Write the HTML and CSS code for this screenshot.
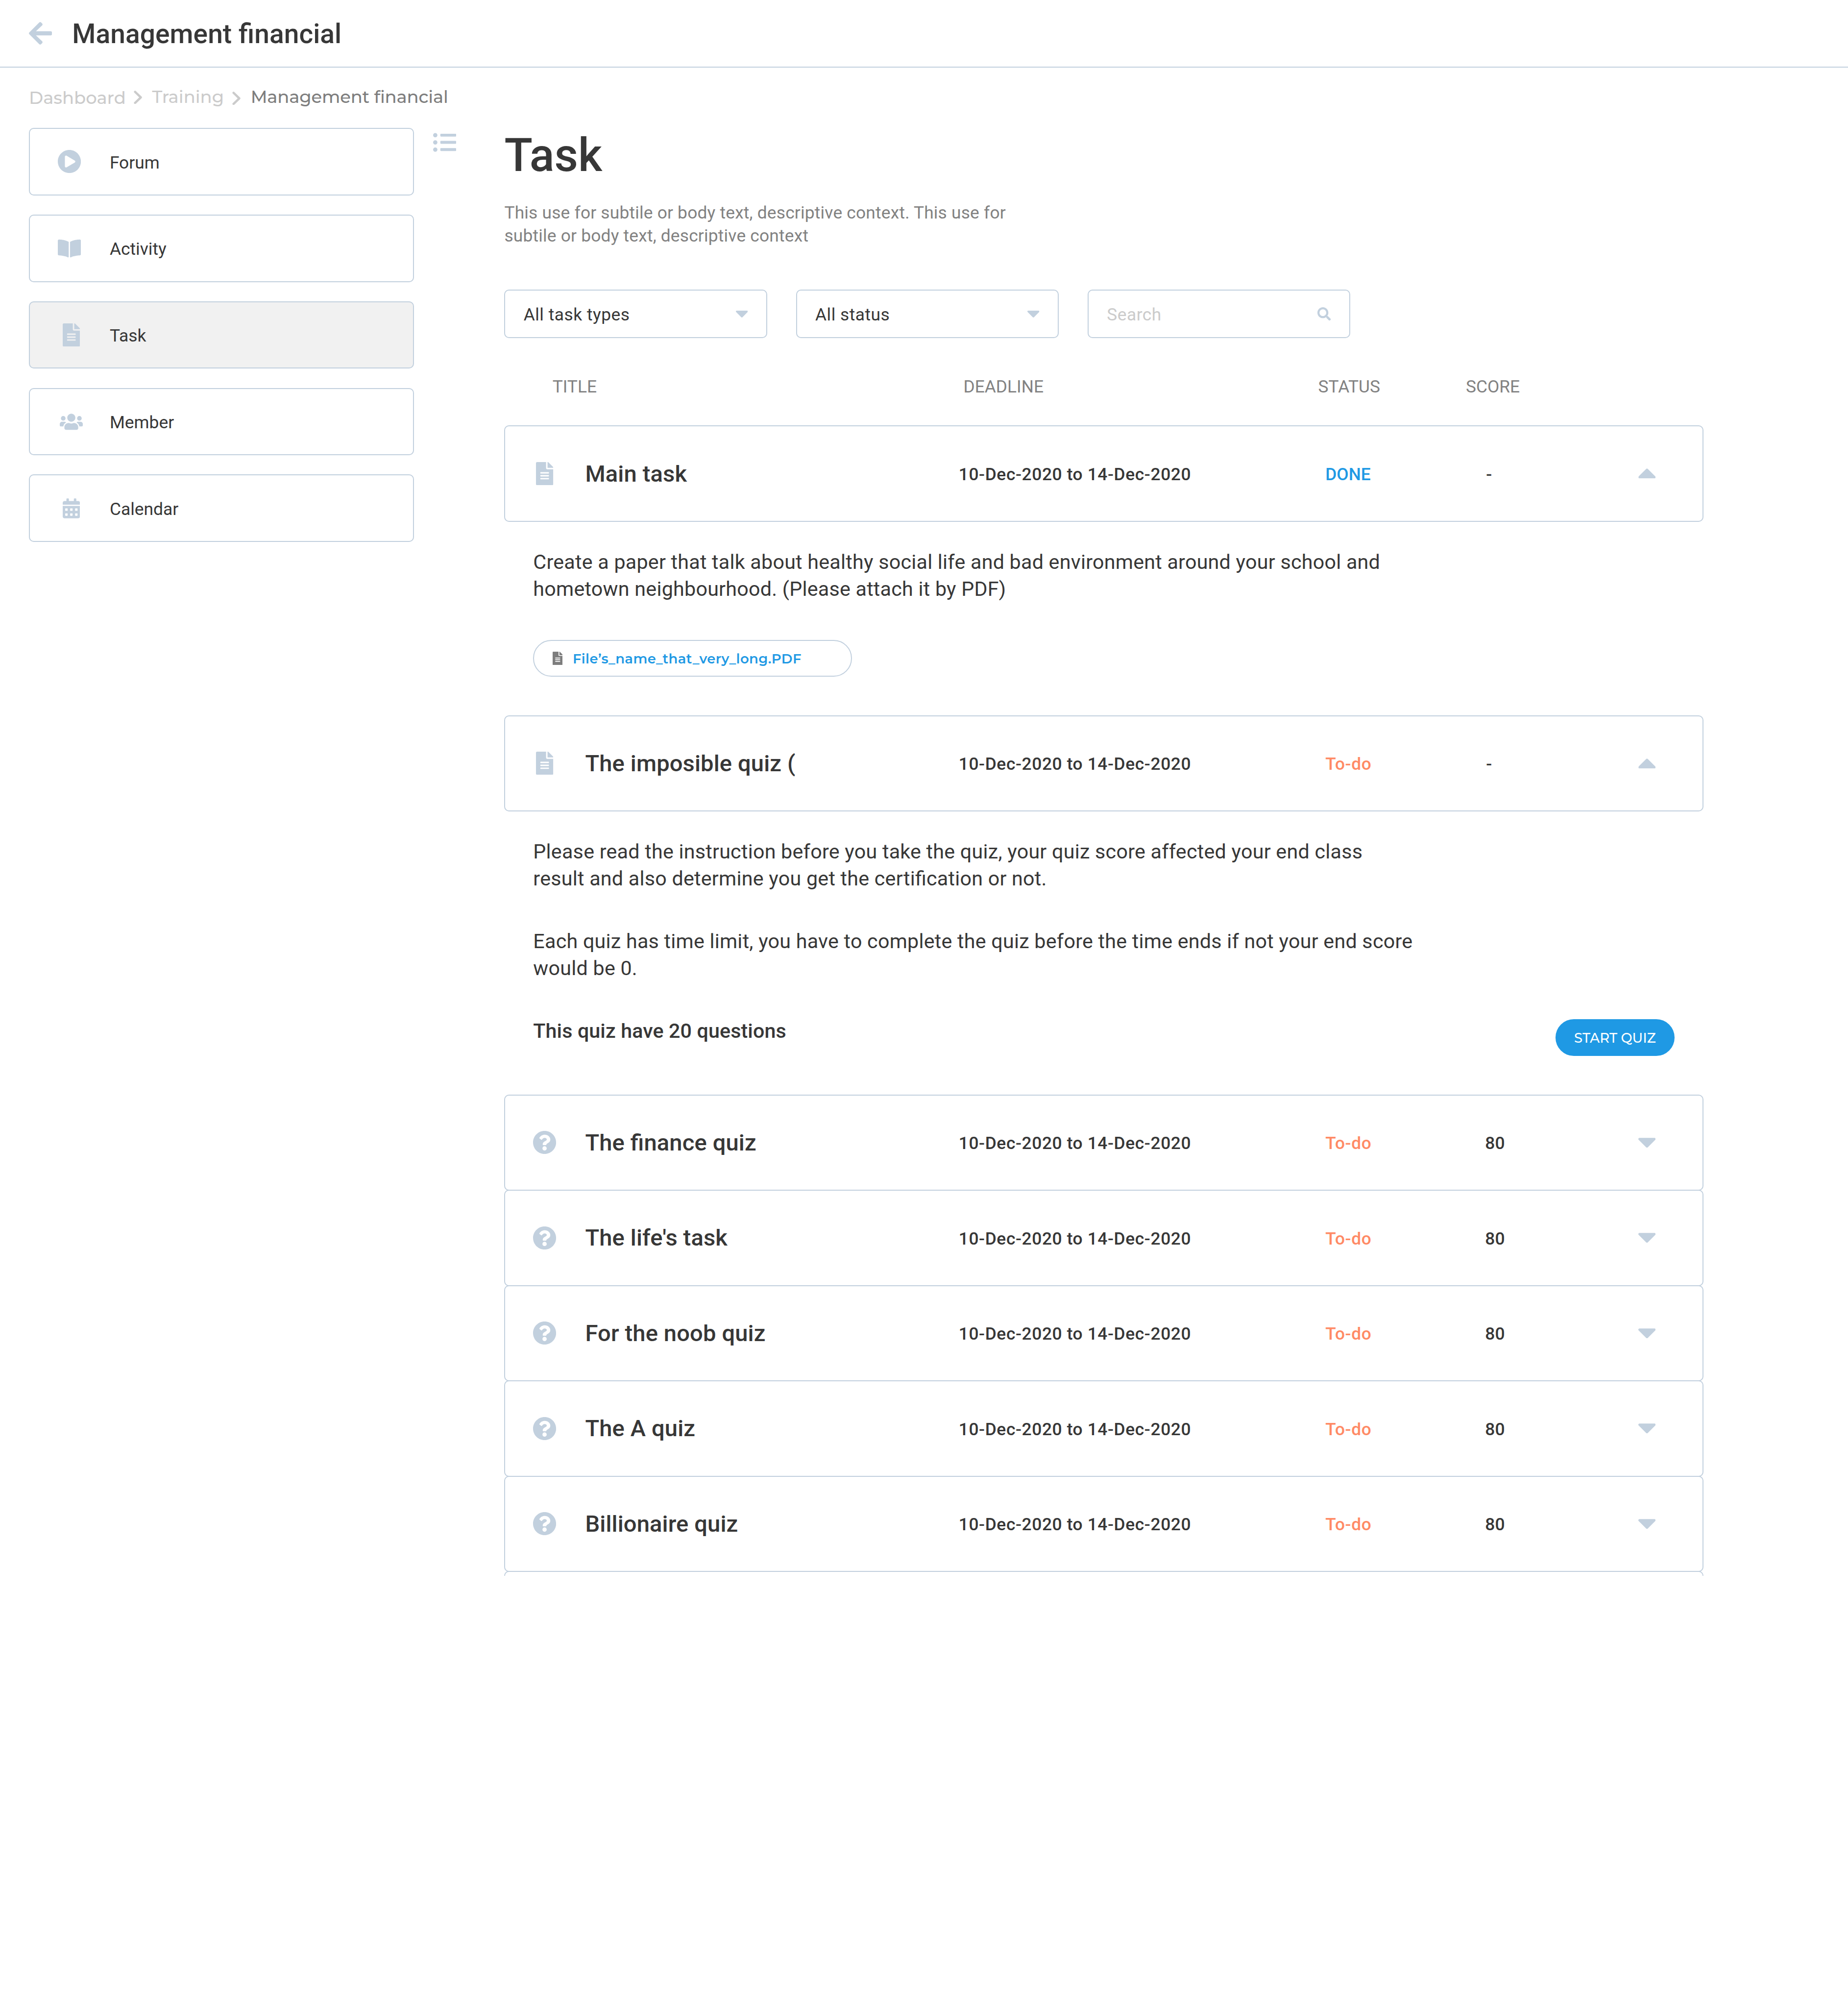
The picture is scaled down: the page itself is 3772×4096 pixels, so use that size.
FILE: index.html
```html
<!DOCTYPE html>
<html lang="en">
<head>
<meta charset="utf-8">
<title>Management financial</title>
<link rel="stylesheet" href="styles.css">
</head>
<body>
<svg class="sprite" aria-hidden="true">
  <symbol id="i-back" viewBox="0 0 448 512"><path d="M257.500 445.100l-22.200 22.200c-9.400 9.400-24.600 9.400-33.900 0L7 273c-9.400-9.400-9.400-24.600 0-33.900L201.400 44.700c9.400-9.400 24.600-9.400 33.900 0l22.200 22.200c9.500 9.500 9.300 25-.4 34.300L136.600 216H424c13.300 0 24 10.700 24 24v32c0 13.300-10.700 24-24 24H136.600l120.500 114.800c9.800 9.300 10 24.800.4 34.300z"/></symbol>
  <symbol id="i-chevron" viewBox="0 0 18 28"><path d="M2.700 2.500l12 11.500-12 11.500" fill="none" stroke="currentColor" stroke-width="4.600" stroke-linecap="round" stroke-linejoin="round"/></symbol>
  <symbol id="i-play" viewBox="8 8 496 496"><path d="M256 8C119 8 8 119 8 256s111 248 248 248 248-111 248-248S393 8 256 8zm115.700 272l-176 101c-15.800 8.800-35.700-2.500-35.700-21V152c0-18.400 19.800-29.800 35.700-21l176 107c16.400 9.200 16.400 32.900 0 42z"/></symbol>
  <symbol id="i-book" viewBox="0 0 576 512"><path d="M542.220 32.050c-54.800 3.110-163.720 14.430-230.960 55.590-4.640 2.840-7.270 7.890-7.270 13.170v363.870c0 11.550 12.630 18.850 23.280 13.490 69.180-34.820 169.230-44.320 218.700-46.920 16.890-.89 30.020-14.430 30.020-30.660V62.750c.01-17.710-15.350-31.740-33.770-30.700zM264.730 87.640C197.500 46.480 88.580 35.170 33.780 32.050 15.360 31.010 0 45.040 0 62.750V400.600c0 16.240 13.130 29.780 30.020 30.660 49.490 2.600 149.590 12.110 218.770 46.950 10.620 5.350 23.210-1.940 23.210-13.460V100.630c0-5.290-2.620-10.140-7.270-12.990z"/></symbol>
  <symbol id="i-file" viewBox="0 0 384 512"><path d="M224 136V0H24C10.700 0 0 10.700 0 24v464c0 13.300 10.700 24 24 24h336c13.300 0 24-10.700 24-24V160H248c-13.200 0-24-10.800-24-24zm64 236c0 6.600-5.400 12-12 12H108c-6.600 0-12-5.400-12-12v-8c0-6.600 5.400-12 12-12h168c6.600 0 12 5.400 12 12v8zm0-64c0 6.600-5.400 12-12 12H108c-6.600 0-12-5.400-12-12v-8c0-6.600 5.400-12 12-12h168c6.600 0 12 5.400 12 12v8zm0-72v8c0 6.600-5.400 12-12 12H108c-6.600 0-12-5.400-12-12v-8c0-6.600 5.400-12 12-12h168c6.600 0 12 5.400 12 12zm96-114.100v6.100H256V0h6.100c6.400 0 12.500 2.500 17 7l97.900 98c4.500 4.500 7 10.600 7 16.900z"/></symbol>
  <symbol id="i-users" viewBox="0 0 640 512"><path d="M96 224c35.300 0 64-28.700 64-64s-28.700-64-64-64-64 28.700-64 64 28.700 64 64 64zm448 0c35.300 0 64-28.700 64-64s-28.700-64-64-64-64 28.700-64 64 28.700 64 64 64zm32 32h-64c-17.600 0-33.500 7.100-45.100 18.600 40.300 22.100 68.900 62 75.100 109.400h66c17.700 0 32-14.300 32-32v-32c0-35.300-28.700-64-64-64zm-256 0c61.900 0 112-50.100 112-112S381.900 32 320 32 208 82.100 208 144s50.100 112 112 112zm76.800 32h-8.300c-20.800 10-43.900 16-68.500 16s-47.600-6-68.500-16h-8.300C179.600 288 128 339.600 128 403.200V432c0 26.500 21.500 48 48 48h288c26.500 0 48-21.500 48-48v-28.800c0-63.600-51.600-115.200-115.200-115.200zm-223.700-13.400C161.500 263.100 145.600 256 128 256H64c-35.300 0-64 28.700-64 64v32c0 17.700 14.300 32 32 32h65.900c6.300-47.400 34.900-87.300 75.200-109.400z"/></symbol>
  <symbol id="i-calendar" viewBox="0 0 448 512"><path d="M0 464c0 26.500 21.500 48 48 48h352c26.500 0 48-21.500 48-48V192H0v272zm320-196c0-6.600 5.400-12 12-12h40c6.600 0 12 5.400 12 12v40c0 6.600-5.400 12-12 12h-40c-6.600 0-12-5.400-12-12v-40zm0 128c0-6.600 5.400-12 12-12h40c6.600 0 12 5.400 12 12v40c0 6.600-5.400 12-12 12h-40c-6.600 0-12-5.400-12-12v-40zM192 268c0-6.600 5.400-12 12-12h40c6.600 0 12 5.400 12 12v40c0 6.600-5.400 12-12 12h-40c-6.600 0-12-5.400-12-12v-40zm0 128c0-6.600 5.400-12 12-12h40c6.600 0 12 5.400 12 12v40c0 6.600-5.400 12-12 12h-40c-6.600 0-12-5.400-12-12v-40zM64 268c0-6.600 5.400-12 12-12h40c6.600 0 12 5.400 12 12v40c0 6.600-5.400 12-12 12H76c-6.600 0-12-5.400-12-12v-40zm0 128c0-6.600 5.400-12 12-12h40c6.600 0 12 5.400 12 12v40c0 6.600-5.400 12-12 12H76c-6.600 0-12-5.400-12-12v-40zM400 64h-48V16c0-8.800-7.200-16-16-16h-32c-8.800 0-16 7.200-16 16v48H160V16c0-8.800-7.200-16-16-16h-32c-8.800 0-16 7.200-16 16v48H48C21.500 64 0 85.500 0 112v48h448v-48c0-26.500-21.500-48-48-48z"/></symbol>
  <symbol id="i-list" viewBox="0 0 512 512"><path d="M48 48a48 48 0 1 0 48 48 48 48 0 0 0-48-48zm0 160a48 48 0 1 0 48 48 48 48 0 0 0-48-48zm0 160a48 48 0 1 0 48 48 48 48 0 0 0-48-48zm448 16H176a16 16 0 0 0-16 16v32a16 16 0 0 0 16 16h320a16 16 0 0 0 16-16v-32a16 16 0 0 0-16-16zm0-320H176a16 16 0 0 0-16 16v32a16 16 0 0 0 16 16h320a16 16 0 0 0 16-16V80a16 16 0 0 0-16-16zm0 160H176a16 16 0 0 0-16 16v32a16 16 0 0 0 16 16h320a16 16 0 0 0 16-16v-32a16 16 0 0 0-16-16z"/></symbol>
  <symbol id="i-search" viewBox="0 0 512 512"><path d="M505 442.700L405.300 343c-4.500-4.500-10.600-7-17-7H372c27.600-35.300 44-79.700 44-128C416 93.100 322.900 0 208 0S0 93.100 0 208s93.100 208 208 208c48.300 0 92.700-16.400 128-44v16.300c0 6.400 2.500 12.500 7 17l99.700 99.700c9.400 9.400 24.600 9.400 33.900 0l28.300-28.300c9.400-9.400 9.400-24.600.1-34zM208 336c-70.700 0-128-57.200-128-128 0-70.700 57.200-128 128-128 70.700 0 128 57.200 128 128 0 70.700-57.200 128-128 128z"/></symbol>
  <symbol id="i-down" viewBox="11 192 298 169"><path d="M31.300 192h257.300c17.800 0 26.700 21.500 14.100 34.100L174.100 354.800c-7.800 7.800-20.500 7.800-28.300 0L17.200 226.100C4.600 213.500 13.500 192 31.300 192z"/></symbol>
  <symbol id="i-question" viewBox="8 8 496 496"><path d="M504 256c0 136.997-111.043 248-248 248S8 392.997 8 256C8 119.083 119.043 8 256 8s248 111.083 248 248zM262.655 90c-54.497 0-89.255 22.957-116.549 63.758-3.536 5.286-2.353 12.415 2.715 16.258l34.699 26.310c5.205 3.947 12.621 3.008 16.665-2.122 17.864-22.658 30.113-35.797 57.303-35.797 20.429 0 45.698 13.148 45.698 32.958 0 14.976-12.363 22.667-32.534 33.976C247.128 238.528 216 254.941 216 296v4c0 6.627 5.373 12 12 12h56c6.627 0 12-5.373 12-12v-1.333c0-28.462 83.186-29.647 83.186-106.667 0-58.002-60.165-102-116.531-102zM256 338c-25.365 0-46 20.635-46 46 0 25.364 20.635 46 46 46s46-20.636 46-46c0-25.365-20.635-46-46-46z"/></symbol>
</svg>

<header class="topbar">
  <svg class="back"><use href="#i-back"/></svg>
  <h1 class="topbar-title">Management financial</h1>
</header>

<nav class="crumbs">
  <span class="crumb crumb-root">Dashboard</span>
  <svg class="sep"><use href="#i-chevron"/></svg>
  <span class="crumb crumb-mid">Training</span>
  <svg class="sep sep-low"><use href="#i-chevron"/></svg>
  <span class="crumb crumb-current">Management financial</span>
</nav>

<div class="layout">
  <aside class="side">
    <a class="side-item"><svg class="ic"><use href="#i-play"/></svg><span>Forum</span></a>
    <a class="side-item"><svg class="ic ic-book"><use href="#i-book"/></svg><span>Activity</span></a>
    <a class="side-item active"><svg class="ic ic-narrow"><use href="#i-file"/></svg><span>Task</span></a>
    <a class="side-item"><svg class="ic ic-users"><use href="#i-users"/></svg><span>Member</span></a>
    <a class="side-item"><svg class="ic ic-narrow"><use href="#i-calendar"/></svg><span>Calendar</span></a>
  </aside>
  <svg class="list-toggle"><use href="#i-list"/></svg>

  <main class="main">
    <h2 class="title">Task</h2>
    <p class="desc">This use for subtile or body text, descriptive context. This use for<br>subtile or body text, descriptive context</p>

    <div class="filters">
      <div class="field"><span>All task types</span><svg class="field-caret"><use href="#i-down"/></svg></div>
      <div class="field"><span>All status</span><svg class="field-caret"><use href="#i-down"/></svg></div>
      <div class="field search"><span>Search</span><svg class="field-search"><use href="#i-search"/></svg></div>
    </div>

    <div class="heads">
      <span>TITLE</span><span>DEADLINE</span><span>STATUS</span><span>SCORE</span>
    </div>

    <div class="row">
      <svg class="row-ic file"><use href="#i-file"/></svg><span class="name">Main task</span><span class="date">10-Dec-2020 to 14-Dec-2020</span><span class="done">DONE</span><span class="score none">-</span><svg class="caret up"><use href="#i-down"/></svg>
    </div>
    <section class="detail detail-task">
      <p>Create a paper that talk about healthy social life and bad environment around your school and<br>hometown neighbourhood. (Please attach it by PDF)</p>
      <a class="chip"><svg><use href="#i-file"/></svg><span>File’s_name_that_very_long.PDF</span></a>
    </section>

    <div class="row">
      <svg class="row-ic file"><use href="#i-file"/></svg><span class="name">The imposible quiz (</span><span class="date">10-Dec-2020 to 14-Dec-2020</span><span class="todo">To-do</span><span class="score none">-</span><svg class="caret up"><use href="#i-down"/></svg>
    </div>
    <section class="detail detail-quiz">
      <p>Please read the instruction before you take the quiz, your quiz score affected your end class<br>result and also determine you get the certification or not.</p>
      <p>Each quiz has time limit, you have to complete the quiz before the time ends if not your end score<br>would be 0.</p>
      <div class="quiz-foot"><strong>This quiz have 20 questions</strong><button class="start">START QUIZ</button></div>
    </section>

    <div class="stack">
      <div class="row"><svg class="row-ic"><use href="#i-question"/></svg><span class="name">The finance quiz</span><span class="date">10-Dec-2020 to 14-Dec-2020</span><span class="todo">To-do</span><span class="score">80</span><svg class="caret"><use href="#i-down"/></svg></div>
      <div class="row"><svg class="row-ic"><use href="#i-question"/></svg><span class="name">The life's task</span><span class="date">10-Dec-2020 to 14-Dec-2020</span><span class="todo">To-do</span><span class="score">80</span><svg class="caret"><use href="#i-down"/></svg></div>
      <div class="row"><svg class="row-ic"><use href="#i-question"/></svg><span class="name">For the noob quiz</span><span class="date">10-Dec-2020 to 14-Dec-2020</span><span class="todo">To-do</span><span class="score">80</span><svg class="caret"><use href="#i-down"/></svg></div>
      <div class="row"><svg class="row-ic"><use href="#i-question"/></svg><span class="name">The A quiz</span><span class="date">10-Dec-2020 to 14-Dec-2020</span><span class="todo">To-do</span><span class="score">80</span><svg class="caret"><use href="#i-down"/></svg></div>
      <div class="row"><svg class="row-ic"><use href="#i-question"/></svg><span class="name">Billionaire quiz</span><span class="date">10-Dec-2020 to 14-Dec-2020</span><span class="todo">To-do</span><span class="score">80</span><svg class="caret"><use href="#i-down"/></svg></div>
      <div class="row"></div>
    </div>
  </main>
</div>
</body>
</html>
```
FILE: styles.css
```css
/* 1rem = 100 design pixels */
html { font-size: 98.2292px; }
*, *::before, *::after { box-sizing: border-box; }
body {
  margin: 0;
  min-height: 4096px;
  background: #fff;
  color: #373737;
  font-family: Roboto, sans-serif;
  font-size: .36rem;
  font-feature-settings: "liga" 1;
  overflow: hidden;
}
h1, h2, p { margin: 0; font-weight: 500; }
svg { display: block; flex: none; fill: currentColor; color: #c2d0de; }
.sprite { position: absolute; width: 0; height: 0; }

.topbar {
  display: flex;
  align-items: center;
  height: 1.4rem;
  padding: 0 .6rem;
  border-bottom: 2px solid #c2d0de;
}
.back { width: .48rem; height: .55rem; }
.topbar-title { margin-left: .42rem; font-size: .56rem; line-height: .8rem; padding-top: .03rem; letter-spacing: .001rem; }

.crumbs {
  display: flex;
  align-items: flex-start;
  height: 1.26rem;
  padding: .36rem 0 0 .6rem;
  font-family: Montserrat, Inter, sans-serif;
  font-size: .36rem;
  font-weight: 500;
  line-height: .5rem;
  color: #cbcbcb;
  white-space: nowrap;
}
.crumb-root { width: 2.18rem; padding-top: .02rem; }
.sep { width: .18rem; height: .28rem; margin-top: .12rem; color: #cbcbcb; }
.crumb-mid { width: 1.67rem; margin-left: .2rem; }
.sep-low { margin-top: .14rem; }
.crumb-current { margin-left: .2rem; color: #7d7d7d; letter-spacing: -.0016rem; }

.layout { display: flex; align-items: flex-start; padding-left: .6rem; }
.side { display: flex; flex-direction: column; gap: .4rem; width: 8rem; }
.side-item {
  display: flex;
  align-items: center;
  height: 1.4rem;
  padding-left: .58rem;
  border: 2px solid #c2d0de;
  border-radius: .1rem;
}
.side-item span { margin-left: auto; width: 6.3rem; padding-top: .03rem; }
.side-item.active { background: #f1f1f1; }
.ic { width: .48rem; height: .48rem; }
.ic-book { height: .427rem; }
.ic-narrow { width: .36rem; margin-left: .1rem; }
.ic-users { height: .384rem; margin-left: .04rem; }
.list-toggle { width: .48rem; height: .48rem; margin: .055rem 0 0 .4rem; }

.main { width: 24.92rem; margin-left: 1rem; }
.title { padding-top: .01rem; font-size: .96rem; line-height: 1.12rem; }
.desc { margin-top: .39rem; font-weight: 400; line-height: .48rem; color: #828282; letter-spacing: .0018rem; }

.filters { display: flex; gap: .6rem; margin-top: .88rem; }
.field {
  display: flex;
  align-items: center;
  justify-content: space-between;
  width: 5.46rem;
  height: 1rem;
  padding: 0 .38rem;
  border: 2px solid #c2d0de;
  border-radius: .1rem;
  letter-spacing: .005rem;
}
.field span { padding-top: .03rem; }
.field.search span { color: #cbcbcb; }
.field-caret { width: .25rem; height: .142rem; margin-top: .02rem; }
.field-search { width: .28rem; height: .28rem; }

.heads {
  display: grid;
  grid-template-columns: 8.54rem 7.37rem 3.07rem 2rem;
  height: 1.82rem;
  padding: .81rem 0 0 1rem;
  line-height: .42rem;
  color: #828282;
}

.row {
  display: grid;
  grid-template-columns: 1.08rem 7.76rem 7.62rem 3.32rem 3.18rem .36rem;
  align-items: center;
  height: 2rem;
  padding-left: .58rem;
  border: 2px solid #c2d0de;
  border-radius: .1rem;
  font-weight: 500;
}
.row-ic { width: .48rem; height: .48rem; }
.row-ic.file { width: .36rem; margin-left: .06rem; }
.name { font-size: .48rem; letter-spacing: .0012rem; }
.date, .done, .todo, .score { padding-top: .03rem; }
.date, .todo { letter-spacing: .006rem; }
.score.none { padding-left: .02rem; }
.done { color: #1f99e4; }
.todo { color: #ff8a65; }
.caret { width: .36rem; height: .21rem; }
.caret.up { transform: rotate(180deg); }

.detail { padding: .56rem .6rem 0; font-size: .42rem; line-height: .56rem; }
.detail p { font-weight: 400; letter-spacing: .0023rem; }
.detail-task { height: 4.02rem; }
.detail-quiz { height: 5.88rem; }
.detail-quiz p { margin-bottom: .74rem; }
.chip {
  display: flex;
  align-items: center;
  width: 6.62rem;
  height: .76rem;
  margin-top: .78rem;
  padding-left: .38rem;
  border: 2px solid #c2d0de;
  border-radius: .38rem;
  color: #1f99e4;
  font: 600 .28rem Montserrat, Inter, sans-serif;
  letter-spacing: .0037rem;
}
.chip svg { width: .21rem; height: .28rem; margin-right: .21rem; color: #7d7d7d; }
.quiz-foot { display: flex; justify-content: space-between; align-items: flex-start; }
.quiz-foot strong { font-weight: 500; letter-spacing: .001rem; }
.start {
  width: 2.48rem;
  height: .76rem;
  margin-top: .04rem;
  padding: 0;
  border: 0;
  border-radius: .38rem;
  background: #1f99e4;
  color: #fff;
  font: 500 .28rem Montserrat, Inter, sans-serif;
}

.stack { height: 10rem; overflow: hidden; }
.stack .row + .row { margin-top: -.02rem; }
```
